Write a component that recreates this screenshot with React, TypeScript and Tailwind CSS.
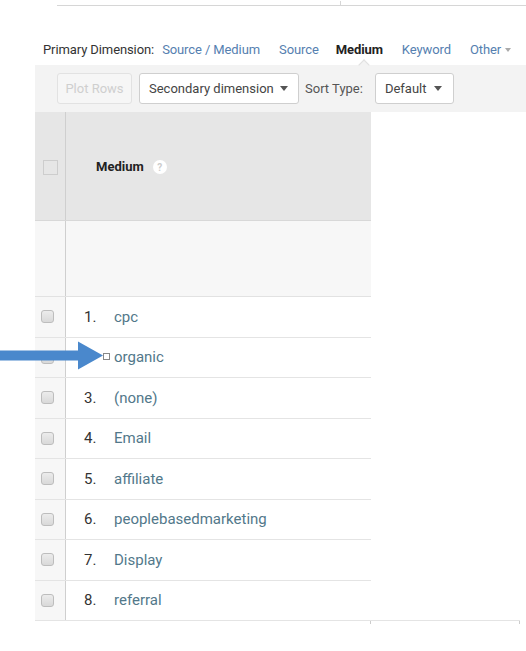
import React from "react";

const rows = ["cpc", "organic", "(none)", "Email", "affiliate", "peoplebasedmarketing", "Display", "referral"];

function Caret() {
  return <span className="inline-block w-0 h-0 border-l-[4px] border-r-[4px] border-t-[5px] border-l-transparent border-r-transparent border-t-[#555]" />;
}

export default function App() {
  return (
    <div className="relative w-[526px] h-[651px] bg-white overflow-hidden text-[#333]" style={{ fontFamily: "Roboto, 'Liberation Sans', sans-serif" }}>
      {/* top line */}
      <div className="ml-[57px] mt-[5px] h-0 border-t border-[#d6d6d6] relative">
        <div className="absolute left-[283px] top-[-5px] h-[5px] border-l border-[#d6d6d6]" />
      </div>

      {/* primary dimension */}
      <div className="mt-[35px] pl-[43px] flex items-center h-[18px] text-[13px] tracking-[-0.1px]">
        <span className="text-[#333]">Primary Dimension:</span>
        <span className="ml-[8px] text-[#5580b0]">Source / Medium</span>
        <span className="ml-[19px] text-[#5580b0]">Source</span>
        <span className="ml-[17px] text-[#222] font-bold">Medium</span>
        <span className="ml-[19px] text-[#5580b0]">Keyword</span>
        <span className="ml-[19px] text-[#5580b0] flex items-center gap-[4px]">Other <span className="inline-block w-0 h-0 border-l-[3px] border-r-[3px] border-t-[4px] border-l-transparent border-r-transparent border-t-[#aaa]" /></span>
      </div>

      {/* toolbar */}
      <div className="relative mt-[6px] ml-[35px] h-[47px] bg-[#f3f3f3] flex items-center pl-[22px] text-[13px]">
        <div className="absolute left-[325px] top-[-4px] w-[8px] h-[8px] rotate-45 bg-[#f3f3f3] border-l border-t border-[#e0e0e0]" />
        <div className="h-[31px] w-[75px] border border-[#e2e2e2] rounded-[3px] bg-[#f6f6f6] flex items-center justify-center text-[#cfcfcf]">Plot Rows</div>
        <div className="ml-[7px] h-[31px] w-[160px] border border-[#cfcfcf] rounded-[3px] bg-white flex items-center pl-[9px] pr-[10px] justify-between text-[#444]">
          <span>Secondary dimension</span>
          <Caret />
        </div>
        <span className="ml-[6px] text-[#555]">Sort Type:</span>
        <div className="ml-[12px] h-[31px] w-[79px] border border-[#cfcfcf] rounded-[3px] bg-white flex items-center pl-[9px] pr-[11px] justify-between text-[#444]">
          <span>Default</span>
          <Caret />
        </div>
      </div>

      {/* table */}
      <div className="ml-[35px] w-[336px]">
        {/* header */}
        <div className="flex h-[109px] bg-[#e6e6e6] border-b border-[#d8d8d8]">
          <div className="w-[31px] border-r border-[#cfcfcf] flex items-center justify-center">
            <div className="w-[15px] h-[15px] border border-[#cdcdcd] mt-[2px]" />
          </div>
          <div className="flex items-center pl-[30px] gap-[9px] mt-[2px]">
            <span className="text-[13px] font-bold text-[#222]">Medium</span>
            <span className="w-[14px] h-[14px] rounded-full bg-white text-[#ccc] text-[10px] font-bold flex items-center justify-center">?</span>
          </div>
        </div>
        {/* summary */}
        <div className="flex h-[76px] bg-[#f7f7f7] border-b border-[#e2e2e2]">
          <div className="w-[31px] border-r border-[#cfcfcf]" />
        </div>
        {rows.map((r, i) => (
          <div key={r} className="flex h-[40.5px] border-b border-[#e4e4e4] bg-white">
            <div className="w-[31px] bg-[#f7f7f7] border-r border-[#cfcfcf] flex items-center pl-[6px]">
              <div className="w-[13px] h-[13px] rounded-[3px] border border-[#bdbdbd] bg-gradient-to-b from-[#ececec] to-[#d9d9d9]" />
            </div>
            <div className="flex items-center text-[15px]">
              <span className="w-[30px] pl-[18px] box-content text-[#333]">{i === 1 ? "" : `${i + 1}.`}</span>
              <span className="text-[#52788a]">{r}</span>
            </div>
          </div>
        ))}
      </div>
      {/* bottom extension line */}
      <div className="relative ml-[371px] w-[149px] h-0 border-t border-[#e4e4e4] -mt-px">
        <div className="absolute left-[-1px] top-0 h-[3px] border-l border-[#ccc]" />
        <div className="absolute right-0 top-0 h-[3px] border-l border-[#ccc]" />
      </div>

      {/* annotation arrow */}
      <div className="absolute left-[103px] top-[353px] w-[7px] h-[7px] border border-[#888] bg-white" />
      <svg className="absolute left-0 top-[341px]" width="104" height="29" viewBox="0 0 104 29">
        <path d="M0 9.5 H78 V0.5 L103 14.5 L78 28.5 V19.5 H0 Z" fill="#4a88cc" />
      </svg>
    </div>
  );
}
